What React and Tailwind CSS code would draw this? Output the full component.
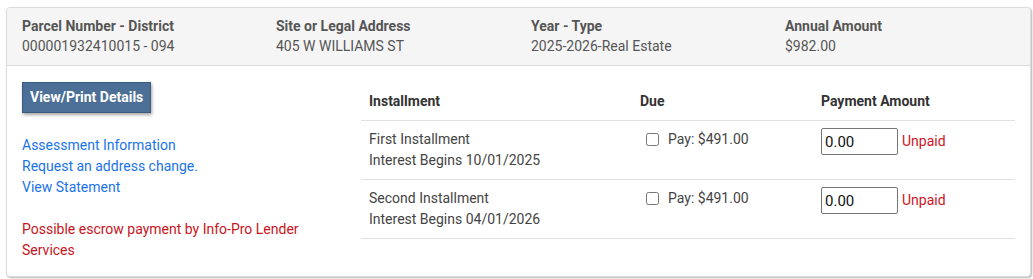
import { useState } from 'react';

const summary = [
  { label: 'Parcel Number - District', value: '000001932410015 - 094' },
  { label: 'Site or Legal Address', value: '405 W WILLIAMS ST' },
  { label: 'Year - Type', value: '2025-2026-Real Estate' },
  { label: 'Annual Amount', value: '$982.00' },
];

const installments = [
  { name: 'First Installment', interest: 'Interest Begins 10/01/2025', due: '$491.00' },
  { name: 'Second Installment', interest: 'Interest Begins 04/01/2026', due: '$491.00' },
];

function InstallmentRow({ item }) {
  const [amount, setAmount] = useState('0.00');
  return (
    <tr className="border-b border-[#dee2e6]">
      <td className="pl-2 py-2 align-top">
        <div>{item.name}</div>
        <div>{item.interest}</div>
      </td>
      <td className="pl-2 py-2 align-top">
        <label className="flex items-center gap-[9px] pl-[6px]">
          <input type="checkbox" className="w-[13px] h-[13px] m-0 accent-[#4a6f95]" />
          <span>Pay: {item.due}</span>
        </label>
      </td>
      <td className="pl-2 pt-[7px] pb-2 align-top">
        <div className="flex items-center gap-1">
          <input
            value={amount}
            onChange={(e) => setAmount(e.target.value)}
            className="w-[77px] h-[27px] border border-[#767676] rounded-[2px] px-[3px] text-[15px] text-[#111] bg-white"
          />
          <span className="text-[#d0141f]">Unpaid</span>
        </div>
      </td>
    </tr>
  );
}

export default function App() {
  return (
    <div className="bg-white min-h-screen pt-[7px] pl-[6px] font-['Roboto',sans-serif] text-[14px] leading-[21px]">
      <div className="w-[1025px] h-[270px] border border-[#dcdcdc] rounded-[4px] shadow-[1px_1px_2px_rgba(0,0,0,0.3)] overflow-hidden bg-white">
        <div className="bg-[#f5f5f5] border-b border-[#dcdcdc] pl-[15px] pt-2 pb-[9px] grid grid-cols-[254px_255px_254px_1fr] text-[#555]">
          {summary.map((s) => (
            <div key={s.label}>
              <div className="font-bold leading-5">{s.label}</div>
              <div className="leading-5">{s.value}</div>
            </div>
          ))}
        </div>

        <div className="flex items-start pl-[15px] pt-4">
          <div className="w-[339px] shrink-0">
            <button className="h-[31px] px-[7px] bg-[#4b6f96] text-white font-bold text-[14px] border border-[#3d5c7d] shadow-[1px_2px_3px_rgba(0,0,0,0.35)]">
              View/Print Details
            </button>
            <div className="mt-[22px] text-[#1a73e8]">
              <div>Assessment Information</div>
              <div>Request an address change.</div>
              <div>View Statement</div>
            </div>
            <div className="mt-[21px] text-[#c8141c] w-[300px]">
              Possible escrow payment by Info-Pro Lender Services
            </div>
          </div>

          <table className="mt-px w-[654px] border-collapse text-[#333] text-left">
            <colgroup>
              <col className="w-[271px]" />
              <col className="w-[181px]" />
              <col />
            </colgroup>
            <thead>
              <tr className="border-b border-[#dee2e6]">
                <th className="pl-2 py-2 font-bold text-[#333]">Installment</th>
                <th className="pl-2 py-2 font-bold text-[#333]">Due</th>
                <th className="pl-2 py-2 font-bold text-[#333]">Payment Amount</th>
              </tr>
            </thead>
            <tbody className="text-[#444]">
              {installments.map((item) => (
                <InstallmentRow key={item.name} item={item} />
              ))}
            </tbody>
          </table>
        </div>
      </div>
    </div>
  );
}
